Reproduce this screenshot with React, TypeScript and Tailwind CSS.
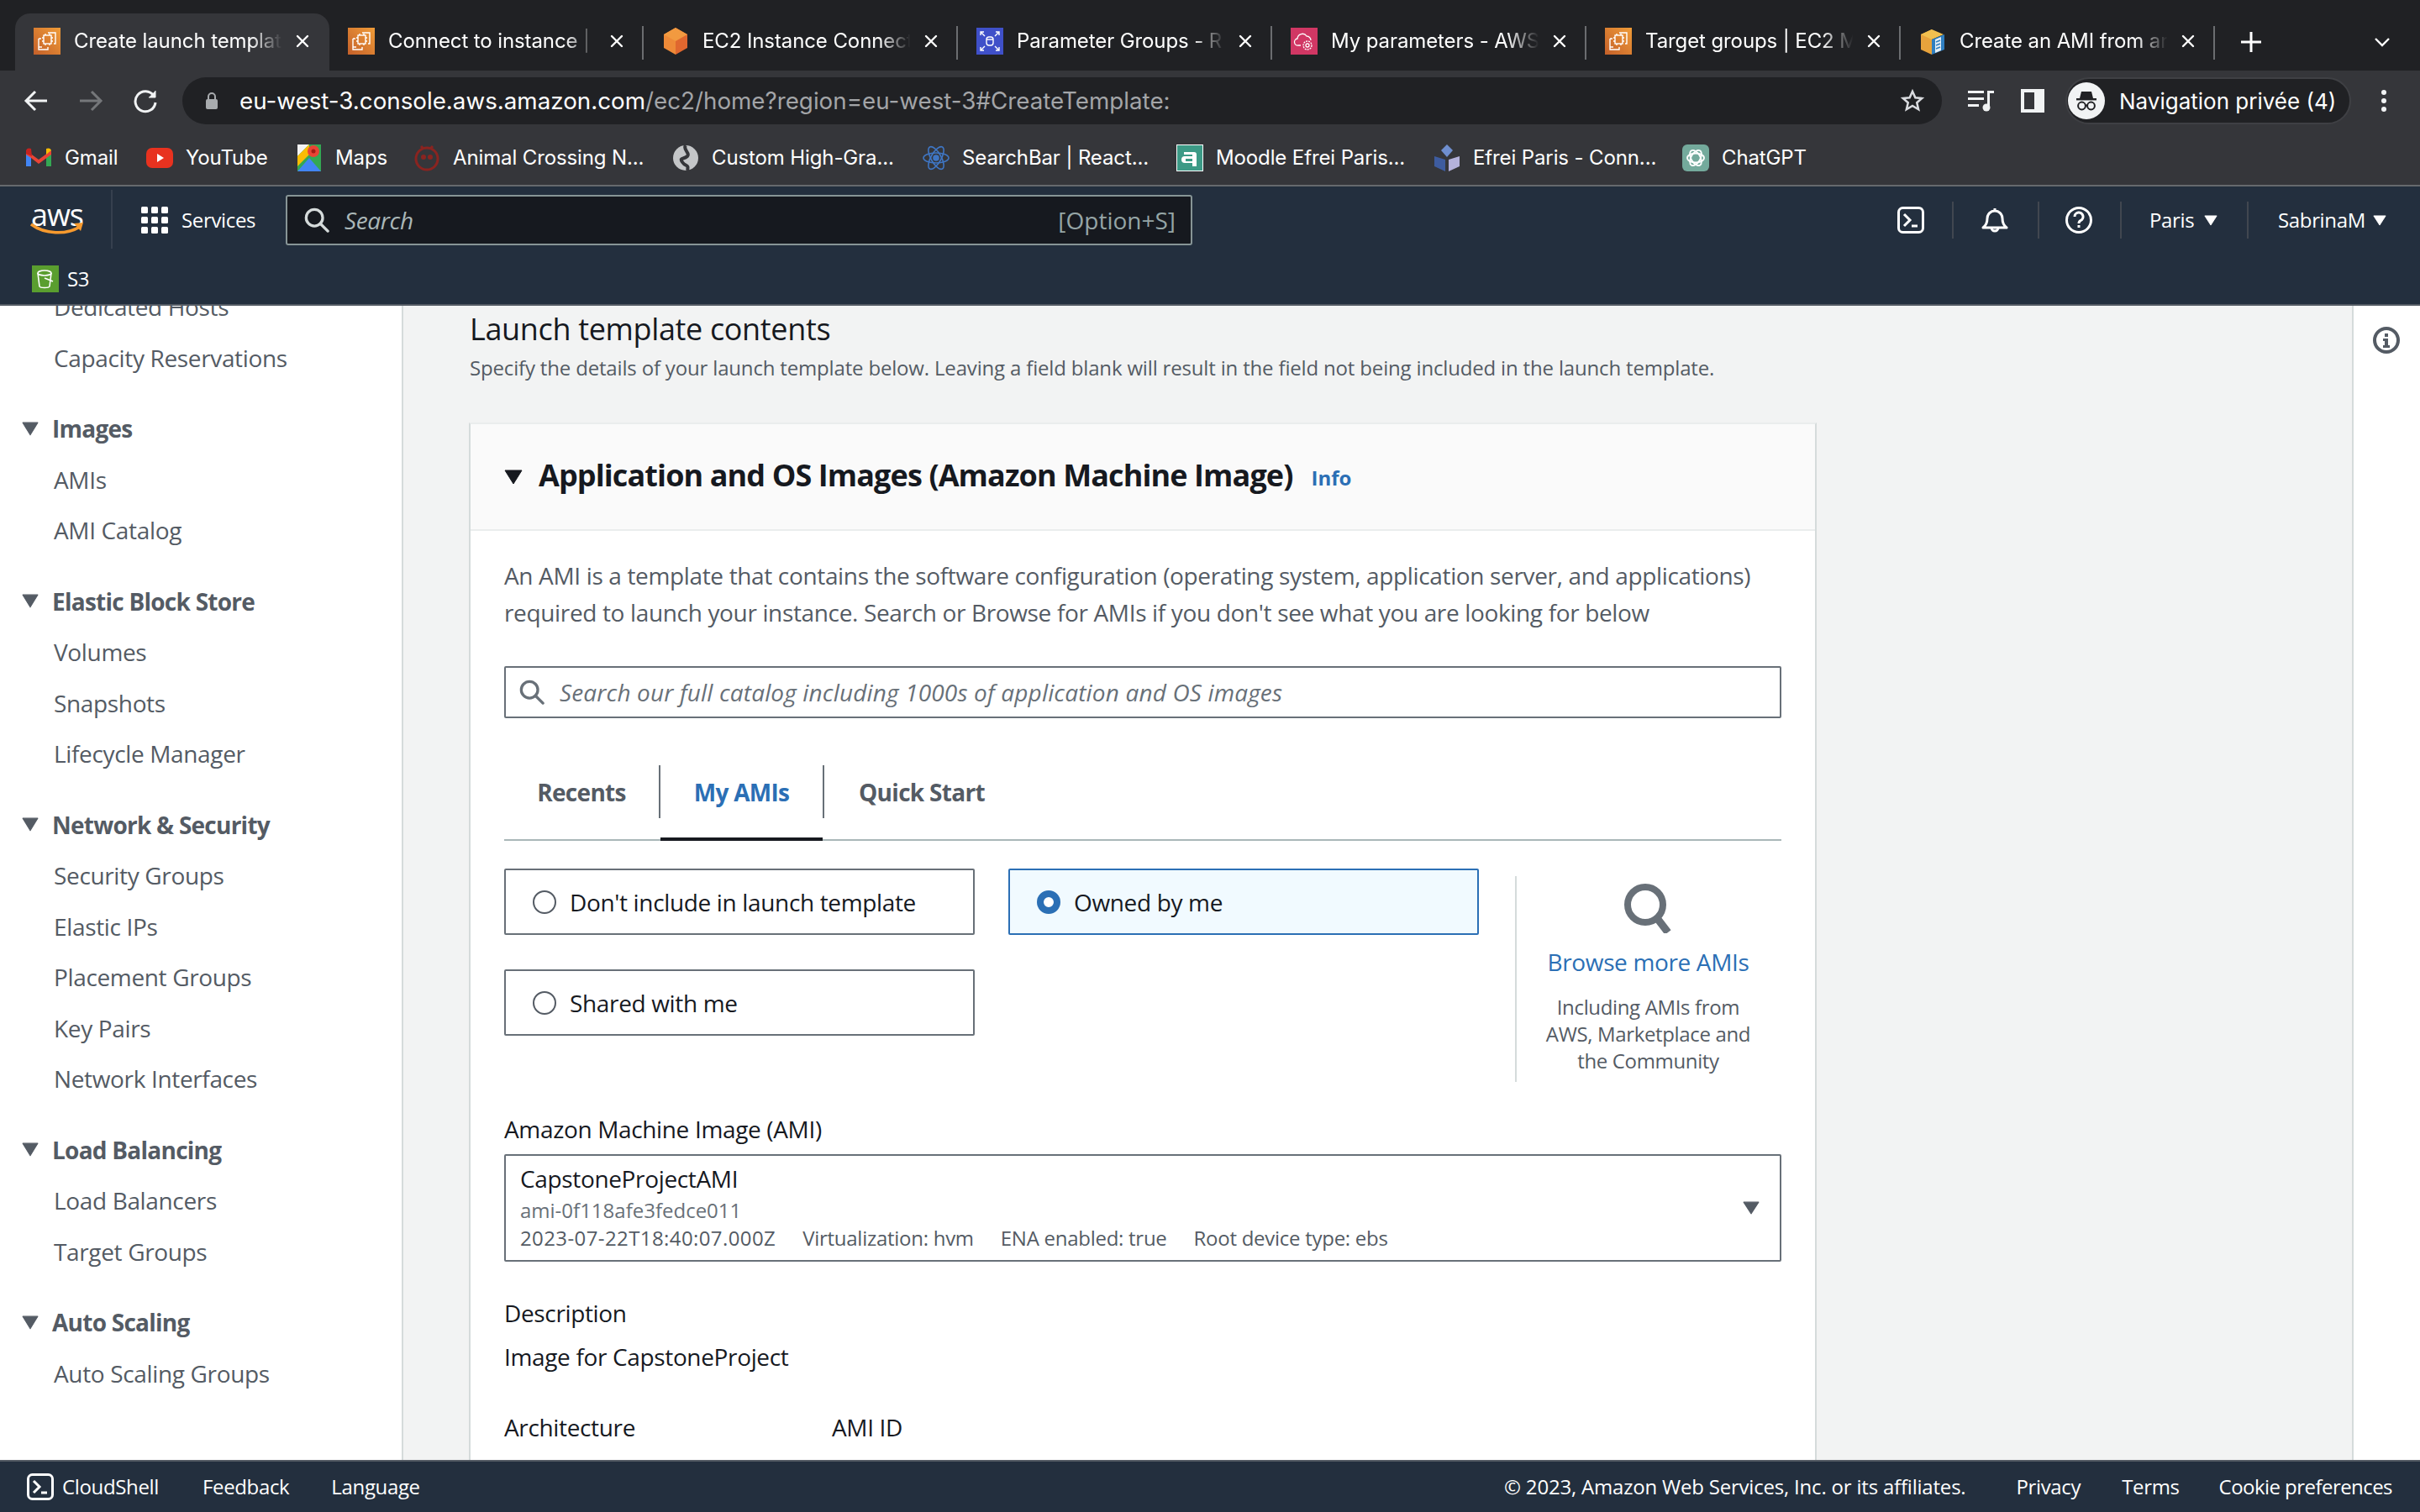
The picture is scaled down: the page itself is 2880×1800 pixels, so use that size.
import React from 'react';

const chromeFont = "font-['Inter',sans-serif] tracking-normal";
const pageFont = "font-['Open_Sans','Noto_Sans',sans-serif] tracking-[-0.35px]";

const Ec2Icon = () => (
  <svg width="32" height="32" viewBox="0 0 32 32" className="shrink-0">
    <defs>
      <linearGradient id="ec2" x1="0" y1="1" x2="1" y2="0">
        <stop offset="0" stopColor="#c4602a" />
        <stop offset="1" stopColor="#f09c38" />
      </linearGradient>
    </defs>
    <rect width="32" height="32" fill="url(#ec2)" />
    <g fill="none" stroke="#fff" strokeWidth="1.4">
      <rect x="12" y="9" width="9" height="10" />
      <path d="M14 7v2M19 7v2M14 19v2M19 19v2M10 12h2M10 16h2M21 12h2M21 16h2" />
      <path d="M17 6h9v13h-2M6 13v13h11v-3" />
      <path d="M6 13h3M6 23h4" />
    </g>
  </svg>
);

const CubeIcon = () => (
  <svg width="32" height="32" viewBox="0 0 32 32" className="shrink-0">
    <path d="M16 0L30 8v16l-14 8z" fill="#e0672f" />
    <path d="M16 0L2 8v16l14 8z" fill="#ee8a38" />
    <path d="M16 0l14 8-14 8L2 8z" fill="#f29a40" />
  </svg>
);

const ParamIcon = () => (
  <svg width="32" height="32" viewBox="0 0 32 32" className="shrink-0">
    <rect width="32" height="32" fill="#3f50c9" />
    <g fill="none" stroke="#fff" strokeWidth="1.4">
      <path d="M5 9V5h4M23 5h4v4M5 23v4h4M27 23v4h-4M6 6l4 4M26 6l-4 4M6 26l4-4M26 26l-4-4" />
      <rect x="12" y="11" width="8" height="10" rx="3" />
      <path d="M12 14h8" />
    </g>
  </svg>
);

const PinkIcon = () => (
  <svg width="32" height="32" viewBox="0 0 32 32" className="shrink-0">
    <rect width="32" height="32" fill="#d13764" />
    <g fill="none" stroke="#fff" strokeWidth="1.3">
      <path d="M12 21H9a4 4 0 0 1-1-8 6 6 0 0 1 11-3 5 5 0 0 1 5 5" />
      <circle cx="20" cy="21" r="2" />
      <circle cx="20" cy="21" r="5" strokeDasharray="2 1" />
    </g>
  </svg>
);

const BoxIcon = () => (
  <svg width="32" height="32" viewBox="0 0 32 32" className="shrink-0">
    <path d="M15 2L2 8v18l13 6z" fill="#e8a33c" />
    <path d="M15 2l14 6-14 6L2 8z" fill="#f2c04f" />
    <path d="M15 14l15-6v18l-15 6z" fill="#2f7fc1" />
    <path d="M19 14l7-3v16l-7 3z" fill="#e4eef6" />
    <path d="M20 17l5-2M20 21l5-2M20 25l5-2" stroke="#2f7fc1" strokeWidth="1.4" />
  </svg>
);

// titles are cut off by the browser in the screenshot, so only the visible part is kept
const tabs = [
  { title: 'Create launch templat', icon: <Ec2Icon />, active: true },
  { title: 'Connect to instance |', icon: <Ec2Icon /> },
  { title: 'EC2 Instance Connect', icon: <CubeIcon /> },
  { title: 'Parameter Groups - R', icon: <ParamIcon /> },
  { title: 'My parameters - AWS', icon: <PinkIcon /> },
  { title: 'Target groups | EC2 M', icon: <Ec2Icon /> },
  { title: 'Create an AMI from ar', icon: <BoxIcon /> },
];

const CloseX = () => (
  <svg width="16" height="16" viewBox="0 0 16 16" className="shrink-0" stroke="#fff" strokeWidth="2.4" strokeLinecap="round">
    <path d="M2 2l12 12M14 2L2 14" />
  </svg>
);

const TabStrip = () => (
  <div className={`h-[84px] bg-[#202124] flex items-end pl-[18px] ${chromeFont}`}>
    {tabs.map((t, i) => (
      <div
        key={i}
        className={`w-[374px] h-[68px] flex items-center pl-[22px] shrink-0 relative ${
          t.active ? 'bg-[#35363a] rounded-t-[18px]' : ''
        }`}
      >
        <div className="flex items-center h-[36px] w-full -mt-[2px]">
          {t.icon}
          <span className="ml-[16px] w-[250px] overflow-hidden whitespace-nowrap text-[24px] leading-[32px] tracking-[-0.1px] text-white [mask-image:linear-gradient(to_right,black_84%,transparent_99%)]">
            {t.title}
          </span>
          <span className="ml-[14px]">
            <CloseX />
          </span>
        </div>
        {!t.active && i !== 0 && (
          <div className="absolute right-0 top-[15px] w-[2px] h-[40px] bg-[#6b6d70]" />
        )}
      </div>
    ))}
    <div className="flex items-center h-[68px] ml-[8px] -mt-[2px]">
      <svg width="28" height="28" viewBox="0 0 28 28" stroke="#fff" strokeWidth="3" className="ml-[21px]">
        <path d="M14 2v24M2 14h24" />
      </svg>
      <svg width="20" height="12" viewBox="0 0 20 12" fill="none" stroke="#fff" strokeWidth="2.4" className="ml-[132px]">
        <path d="M2 2l8 8 8-8" />
      </svg>
    </div>
  </div>
);

const Toolbar = () => (
  <div className={`h-[72px] bg-[#35363a] flex items-center ${chromeFont}`}>
    <svg width="30" height="30" viewBox="0 0 30 30" fill="none" stroke="#f1f3f4" strokeWidth="3" className="ml-[28px]">
      <path d="M28 15H4M14 4L3 15l11 11" />
    </svg>
    <svg width="30" height="30" viewBox="0 0 30 30" fill="none" stroke="#75777a" strokeWidth="3" className="ml-[35px]">
      <path d="M2 15h24M16 4l11 11-11 11" />
    </svg>
    <svg width="30" height="30" viewBox="0 0 30 30" fill="none" stroke="#f1f3f4" strokeWidth="3" className="ml-[35px]">
      <path d="M25 9a12 12 0 1 0 2 8" />
      <path d="M27 3v8h-8" fill="#f1f3f4" strokeWidth="1" />
    </svg>
    <div className="ml-[29px] w-[2094px] h-[56px] rounded-full bg-[#202124] flex items-center pl-[28px] pr-[20px]">
      <svg width="14" height="20" viewBox="0 0 14 20" className="shrink-0">
        <rect y="8" width="14" height="12" rx="2" fill="#a8abae" />
        <path d="M3 9V5a4 4 0 0 1 8 0v4" fill="none" stroke="#a8abae" strokeWidth="2" />
      </svg>
      <span className="ml-[26px] text-[27.75px] leading-[34px] whitespace-nowrap">
        <span className="text-white">eu-west-3.console.aws.amazon.com</span>
        <span className="text-[#a3a5a8]">/ec2/home?region=eu-west-3#CreateTemplate:</span>
      </span>
      <svg width="30" height="30" viewBox="0 0 24 24" fill="none" stroke="#dadce0" strokeWidth="2" className="ml-auto">
        <path d="M12 3l2.7 6 6.3.6-4.8 4.2 1.5 6.4L12 16.8 6.3 20.2l1.5-6.4L3 9.6 9.3 9z" />
      </svg>
    </div>
    <svg width="32" height="28" viewBox="0 0 32 28" className="ml-[31px]" fill="#f1f3f4">
      <rect x="0" y="2" width="19" height="3" />
      <rect x="0" y="10" width="19" height="3" />
      <rect x="0" y="18" width="13" height="3" />
      <rect x="23" y="2" width="3" height="20" />
      <rect x="23" y="2" width="8" height="3" />
      <circle cx="22" cy="22" r="4.5" />
    </svg>
    <svg width="28" height="28" viewBox="0 0 28 28" className="ml-[31px]">
      <rect width="28" height="28" fill="#f1f3f4" />
      <rect x="4" y="4" width="12" height="20" fill="#35363a" />
    </svg>
    <div className="ml-[25px] w-[340px] h-[56px] rounded-full bg-[#202124] border-2 border-[#3f4044] flex items-center pl-[1px] shrink-0">
      <div className="w-[44px] h-[44px] rounded-full bg-[#f1f3f4] flex items-center justify-center shrink-0">
        <svg width="32" height="32" viewBox="0 0 32 32" fill="#202124">
          <path d="M10 5h12l2 8H8z" />
          <rect x="4" y="13" width="24" height="2.4" />
          <circle cx="10.5" cy="22" r="4.4" fill="none" stroke="#202124" strokeWidth="2" />
          <circle cx="21.5" cy="22" r="4.4" fill="none" stroke="#202124" strokeWidth="2" />
          <path d="M14.5 21.5h3" stroke="#202124" strokeWidth="2" />
        </svg>
      </div>
      <span className="ml-[17px] text-[26px] text-white whitespace-nowrap">Navigation privée (4)</span>
    </div>
    <svg width="6" height="26" viewBox="0 0 6 26" fill="#f1f3f4" className="ml-[36px]">
      <circle cx="3" cy="3" r="3" />
      <circle cx="3" cy="13" r="3" />
      <circle cx="3" cy="23" r="3" />
    </svg>
  </div>
);

const GmailIcon = () => (
  <svg width="30" height="24" viewBox="0 0 30 24">
    <path d="M0 3v19h6V8z" fill="#4285f4" />
    <path d="M30 3v19h-6V8z" fill="#34a853" />
    <path d="M0 3l15 11L30 3v5L15 19 6 12 0 8z" fill="#ea4335" />
    <path d="M24 8l6-5c-1-3-4-3-6-2z" fill="#fbbc04" />
    <path d="M0 3c1-3 4-3 6-2l1 9-7-3z" fill="#c5221f" />
  </svg>
);

const bookmarks = [
  { label: 'Gmail', w: 144, icon: <GmailIcon /> },
  {
    label: 'YouTube',
    w: 178,
    icon: (
      <svg width="32" height="32" viewBox="0 0 32 32">
        <rect y="4" width="32" height="24" rx="7" fill="#e8321f" />
        <path d="M13 11l8 5-8 5z" fill="#fff" />
      </svg>
    ),
  },
  {
    label: 'Maps',
    w: 140,
    icon: (
      <svg width="28" height="32" viewBox="0 0 28 32">
        <rect width="28" height="32" fill="#34a853" />
        <path d="M0 32L14 16l14 16z" fill="#4285f4" />
        <path d="M0 0h14L0 14z" fill="#f4f4f4" />
        <path d="M0 14L14 0v12L0 26z" fill="#fbbc04" />
        <circle cx="19" cy="8" r="7" fill="#ea4335" />
        <circle cx="19" cy="8" r="2.5" fill="#a51c14" />
      </svg>
    ),
  },
  {
    label: 'Animal Crossing N...',
    w: 308,
    icon: (
      <svg width="34" height="32" viewBox="0 0 34 32" fill="none" stroke="#8a2420" strokeWidth="3">
        <circle cx="17" cy="17" r="13" />
        <path d="M10 2l3 3M24 2l-3 3" />
        <circle cx="13" cy="15" r="1.5" fill="#8a2420" />
        <circle cx="21" cy="15" r="1.5" fill="#8a2420" />
      </svg>
    ),
  },
  {
    label: 'Custom High-Gra...',
    w: 298,
    icon: (
      <svg width="32" height="32" viewBox="0 0 32 32">
        <circle cx="16" cy="16" r="15" fill="#c4c6c8" />
        <path d="M16 1c-4 5 6 9 2 13S8 15 12 21s8 2 6 10" stroke="#35363a" strokeWidth="4" fill="none" />
      </svg>
    ),
  },
  {
    label: 'SearchBar | React...',
    w: 302,
    icon: (
      <svg width="32" height="32" viewBox="0 0 32 32" fill="none" stroke="#3f76c4" strokeWidth="1.6">
        <ellipse cx="16" cy="16" rx="15" ry="6" />
        <ellipse cx="16" cy="16" rx="15" ry="6" transform="rotate(60 16 16)" />
        <ellipse cx="16" cy="16" rx="15" ry="6" transform="rotate(120 16 16)" />
        <circle cx="16" cy="16" r="3" fill="#3f76c4" />
      </svg>
    ),
  },
  {
    label: 'Moodle Efrei Paris...',
    w: 306,
    icon: (
      <svg width="32" height="32" viewBox="0 0 32 32">
        <rect width="32" height="32" fill="#fff" />
        <rect x="1" y="1" width="30" height="30" fill="#3c9a86" />
        <path d="M9 9h12a3 3 0 0 1 3 3v14h-5v-4H10a4 4 0 0 1 0-8h9v-2H9z" fill="#fff" />
        <rect x="11" y="17" width="8" height="3" fill="#3c9a86" />
      </svg>
    ),
  },
  {
    label: 'Efrei Paris - Conn...',
    w: 296,
    icon: (
      <svg width="30" height="32" viewBox="0 0 30 32">
        <path d="M15 0l7 7-7 8-7-8z" fill="#6f8fd0" />
        <path d="M0 14l13 4v14L0 26z" fill="#3e5c9f" />
        <path d="M30 14l-13 4v14l13-6z" fill="#b4b2dc" />
      </svg>
    ),
  },
  {
    label: 'ChatGPT',
    w: 200,
    icon: (
      <svg width="32" height="32" viewBox="0 0 32 32">
        <rect width="32" height="32" rx="6" fill="#74aa9c" />
        <g fill="none" stroke="#fff" strokeWidth="1.8">
          <ellipse cx="16" cy="16" rx="10" ry="5.5" />
          <ellipse cx="16" cy="16" rx="10" ry="5.5" transform="rotate(60 16 16)" />
          <ellipse cx="16" cy="16" rx="10" ry="5.5" transform="rotate(120 16 16)" />
        </g>
      </svg>
    ),
  },
];

const BookmarksBar = () => (
  <div className={`h-[64px] bg-[#35363a] flex items-center pl-[29px] ${chromeFont}`}>
    {bookmarks.map((b) => (
      <div key={b.label} className="flex items-center shrink-0" style={{ width: b.w }}>
        <span className="w-[34px] flex justify-center shrink-0">{b.icon}</span>
        <span className="ml-[14px] text-[24px] tracking-[-0.12px] text-white whitespace-nowrap">{b.label}</span>
      </div>
    ))}
  </div>
);

const Divider = () => <div className="w-[2px] h-[44px] bg-[#414750] shrink-0" />;

const Caret = ({ w = 16, h = 13, color = '#fff' }: { w?: number; h?: number; color?: string }) => (
  <svg width={w} height={h} viewBox="0 0 18 14" preserveAspectRatio="none" className="shrink-0">
    <path d="M1 1h16L9 13z" fill={color} stroke={color} strokeLinejoin="round" />
  </svg>
);

const SearchGlyph = ({ size, color, width = 3.5 }: { size: number; color: string; width?: number }) => (
  <svg width={size} height={size} viewBox="0 0 32 32" fill="none" stroke={color} strokeWidth={width} className="shrink-0">
    <circle cx="13" cy="13" r="10.5" />
    <path d="M20.5 20.5L30 30" strokeLinecap="round" />
  </svg>
);

const AwsHeader = () => (
  <div className={`h-[142px] bg-[#232f3e] border-b-2 border-[#545b64] shrink-0 text-white ${pageFont}`}>
    <div className="h-[80px] flex items-center">
      <div className="ml-[36px] w-[64px] h-[40px] relative shrink-0 -mt-[2px]">
        <span className="block text-[36px] leading-[30px] text-center tracking-[-1px]">aws</span>
        <svg width="64" height="16" viewBox="0 0 64 16" className="absolute left-0 bottom-0">
          <path d="M1 2c16 12 42 13 58 3" fill="none" stroke="#f79a2e" strokeWidth="3.5" />
          <path d="M52 1l11-1-3 10z" fill="#f79a2e" />
        </svg>
      </div>
      <div className="ml-[32px] w-[2px] h-[70px] bg-[#36404e] shrink-0 -mt-[2px]" />
      <svg width="32" height="32" viewBox="0 0 32 32" fill="#fff" className="ml-[34px] shrink-0">
        {[0, 12, 24].flatMap((y) =>
          [0, 12, 24].map((x) => <rect key={`${x}-${y}`} x={x} y={y} width="8" height="8" rx="1.5" />)
        )}
      </svg>
      <span className="ml-[16px] text-[24px] w-[90px] whitespace-nowrap">Services</span>
      <div className="ml-[34px] w-[1079px] h-[60px] bg-[#16191f] border-2 border-[#879596] rounded-[3px] flex items-center pl-[20px] pr-[18px] shrink-0">
        <SearchGlyph size={30} color="#d5dbdb" />
        <span className="ml-[18px] text-[28px] italic text-[#aab7b8]">Search</span>
        <span className="ml-auto text-[28px] tracking-normal text-[#95a5a6]">[Option+S]</span>
      </div>
      <svg width="32" height="32" viewBox="0 0 32 32" fill="none" stroke="#fff" strokeWidth="3" className="ml-[839px] shrink-0">
        <rect x="1.5" y="1.5" width="29" height="29" rx="5" />
        <path d="M8 9l7 7-7 7M17 23h7" />
      </svg>
      <div className="ml-[33px]"><Divider /></div>
      <svg width="32" height="32" viewBox="0 0 32 32" fill="none" stroke="#fff" strokeWidth="3" className="ml-[33px] shrink-0">
        <path d="M2 25c4-3 5-6 5-11a9 9 0 0 1 18 0c0 5 1 8 5 11z" strokeLinejoin="round" />
        <path d="M12 25a4 4 0 0 0 8 0M16 2v3" />
      </svg>
      <div className="ml-[35px]"><Divider /></div>
      <svg width="32" height="32" viewBox="0 0 32 32" fill="none" stroke="#fff" strokeWidth="3" className="ml-[31px] shrink-0">
        <circle cx="16" cy="16" r="14.5" />
        <path d="M11 12a5 5 0 1 1 7 4.6c-1.6.8-2 1.6-2 3.4" />
        <path d="M16 22v3" />
      </svg>
      <div className="ml-[33px]"><Divider /></div>
      <span className="ml-[33px] text-[24px] w-[65px]">Paris</span>
      <Caret />
      <div className="ml-[35px]"><Divider /></div>
      <span className="ml-[35px] text-[24px] w-[113px] whitespace-nowrap">SabrinaM</span>
      <Caret />
    </div>
    <div className="h-[60px] flex items-center pl-[38px]">
      <svg width="32" height="32" viewBox="0 0 32 32" className="shrink-0">
        <rect width="32" height="32" fill="#5a9e2f" />
        <g fill="none" stroke="#fff" strokeWidth="1.6">
          <ellipse cx="15" cy="9" rx="8" ry="3" />
          <path d="M7 9l2 16c1 2 11 2 12 0l2-16" />
          <path d="M15 15l10 4" />
        </g>
      </svg>
      <span className="ml-[10px] text-[24px]">S3</span>
    </div>
  </div>
);

type NavGroup = { title?: string; items: string[] };

const navGroups: NavGroup[] = [
  { items: ['Dedicated Hosts', 'Capacity Reservations'] },
  { title: 'Images', items: ['AMIs', 'AMI Catalog'] },
  { title: 'Elastic Block Store', items: ['Volumes', 'Snapshots', 'Lifecycle Manager'] },
  {
    title: 'Network & Security',
    items: ['Security Groups', 'Elastic IPs', 'Placement Groups', 'Key Pairs', 'Network Interfaces'],
  },
  { title: 'Load Balancing', items: ['Load Balancers', 'Target Groups'] },
  { title: 'Auto Scaling', items: ['Auto Scaling Groups'] },
];

const Sidebar = () => (
  <div className="w-[480px] shrink-0 bg-white border-r-2 border-[#d5dbdb] overflow-hidden">
    <div className="-mt-[29px]">
      {navGroups.map((g, i) => (
        <div key={i} className="mb-[24px]">
          {g.title && (
            <div className="h-[60.5px] flex items-center pl-[26px]">
              <Caret w={20} h={17} color="#545b64" />
              <span className="ml-[16px] text-[28px] font-bold tracking-[-0.75px] text-[#545b64] whitespace-nowrap">{g.title}</span>
            </div>
          )}
          {g.items.map((it) => (
            <div key={it} className="h-[60.5px] flex items-center pl-[64px] text-[28px] text-[#545b64] whitespace-nowrap">
              {it}
            </div>
          ))}
        </div>
      ))}
    </div>
  </div>
);

const RadioCard = ({ label, selected }: { label: string; selected?: boolean }) => (
  <div
    className={`w-[560px] h-[79px] rounded-[2px] border-2 flex items-center pl-[32px] ${
      selected ? 'bg-[#f1faff] border-[#2b6fb5]' : 'bg-white border-[#687078]'
    }`}
  >
    {selected ? (
      <span className="w-[28px] h-[28px] rounded-full border-[8px] border-[#2b6fb5] bg-white shrink-0" />
    ) : (
      <span className="w-[28px] h-[28px] rounded-full border-2 border-[#545b64] bg-white shrink-0" />
    )}
    <span className="ml-[16px] text-[28px] text-[#16191f]">{label}</span>
  </div>
);

const Tab = ({ label, active, width }: { label: string; active?: boolean; width: string }) => (
  <div
    className={`${width} h-full relative flex items-center justify-center pt-[7px] text-[28px] font-bold tracking-[-0.7px] ${
      active ? 'text-[#2b6fb5]' : 'text-[#545b64]'
    }`}
  >
    {label}
    {active && <div className="absolute left-0 right-0 -bottom-[2px] h-[4px] bg-[#16191f]" />}
  </div>
);

const TabSep = () => <div className="w-[2px] h-[63px] bg-[#687078] self-center mt-[6px] shrink-0" />;

const Panel = () => (
  <div className="-ml-[1px] mt-[49px] w-[1604px] flex-1 shrink-0 bg-white border-x-2 border-t-2 border-x-[#d5dbdb] border-t-[#eaeded]">
    <div className="h-[127px] bg-[#fafafa] border-b-2 border-[#eaeded] flex items-center pl-[40px]">
      <svg width="22" height="18" viewBox="0 0 22 18" className="shrink-0">
        <path d="M1 1h20L11 17z" fill="#16191f" stroke="#16191f" strokeLinejoin="round" />
      </svg>
      <h2 className="ml-[19px] -mt-[4px] text-[36px] font-bold tracking-[-0.9px] text-[#16191f] whitespace-nowrap">
        Application and OS Images (Amazon Machine Image)
      </h2>
      <span className="ml-[22px] mt-[2px] text-[24px] font-bold tracking-normal text-[#2b6fb5]">Info</span>
    </div>
    <div className="px-[40px] pt-[31px]">
      <p className="text-[28px] leading-[44px] text-[#545b64] w-[1520px]">
        An AMI is a template that contains the software configuration (operating system, application server, and
        applications) required to launch your instance. Search or Browse for AMIs if you don't see what you are looking
        for below
      </p>
      <div className="mt-[42px] h-[62px] rounded-[2px] border-2 border-[#687078] flex items-center pl-[16px]">
        <SearchGlyph size={30} color="#687078" />
        <span className="ml-[18px] text-[28px] italic tracking-[0.15px] text-[#687078]">
          Search our full catalog including 1000s of application and OS images
        </span>
      </div>
      <div className="mt-[25px] h-[121px] flex border-b-2 border-[#aab7b8]">
        <Tab label="Recents" width="w-[184px]" />
        <TabSep />
        <Tab label="My AMIs" active width="w-[193px]" />
        <TabSep />
        <Tab label="Quick Start" width="w-[232px]" />
      </div>
      <div className="mt-[33px] flex">
        <div className="w-[1160px] shrink-0 flex flex-wrap gap-x-[40px] gap-y-[41px] content-start">
          <RadioCard label="Don't include in launch template" />
          <RadioCard label="Owned by me" selected />
          <RadioCard label="Shared with me" />
        </div>
        <div className="ml-[43px] mt-[9px] w-[317px] h-[245px] border-l-2 border-[#d5dbdb] pr-[2px] flex flex-col items-center">
          <svg width="60" height="60" viewBox="0 0 60 60" fill="none" stroke="#687078" strokeWidth="8" className="mt-[8px] shrink-0">
            <circle cx="26" cy="26" r="21" />
            <path d="M40 42l13 17" strokeWidth="9" />
          </svg>
          <a className="mt-[16px] text-[28px] leading-[36px] text-[#2b6fb5]">Browse more AMIs</a>
          <p className="mt-[20px] w-[255px] text-center text-[24px] leading-[32px] text-[#545b64]">
            Including AMIs from AWS, Marketplace and the Community
          </p>
        </div>
      </div>
      <label className="block mt-[40px] text-[28px] leading-[32px] text-[#16191f]">Amazon Machine Image (AMI)</label>
      <div className="mt-[14px] h-[128px] rounded-[2px] border-2 border-[#687078] flex items-center pl-[17px] pr-[24px]">
        <div className="flex-1 -mt-[2px]">
          <div className="text-[28px] leading-[34px] text-[#16191f]">CapstoneProjectAMI</div>
          <div className="mt-[4px] text-[24px] leading-[34px] tracking-normal text-[#687078]">ami-0f118afe3fedce011</div>
          <div className="mt-[1px] text-[24px] leading-[30px] tracking-[-0.27px] text-[#545b64] flex gap-[32px] whitespace-nowrap">
            <span className="tracking-[0.4px]">2023-07-22T18:40:07.000Z</span>
            <span>Virtualization: hvm</span>
            <span>ENA enabled: true</span>
            <span>Root device type: ebs</span>
          </div>
        </div>
        <Caret w={20} h={16} color="#545b64" />
      </div>
      <div className="mt-[45px] text-[28px] leading-[32px] text-[#16191f]">Description</div>
      <div className="mt-[20px] text-[28px] leading-[32px] text-[#16191f]">Image for CapstoneProject</div>
      <div className="mt-[52px] flex text-[28px] leading-[32px] text-[#16191f]">
        <span className="w-[390px]">Architecture</span>
        <span>AMI ID</span>
      </div>
    </div>
  </div>
);

const MainArea = () => (
  <div className="flex-1 min-w-0 bg-[#f2f3f3] overflow-hidden pl-[79px] flex flex-col">
    <h1 className="mt-[8px] text-[36px] leading-[40px] text-[#16191f]">Launch template contents</h1>
    <p className="mt-[10px] text-[24px] leading-[32px] tracking-[-0.17px] text-[#545b64] whitespace-nowrap">
      Specify the details of your launch template below. Leaving a field blank will result in the field not being
      included in the launch template.
    </p>
    <Panel />
  </div>
);

const InfoRail = () => (
  <div className="w-[81px] shrink-0 bg-white border-l-2 border-[#d5dbdb] flex justify-center pt-[25px]">
    <svg width="32" height="32" viewBox="0 0 32 32" fill="none" className="shrink-0 -ml-[2px]">
      <circle cx="16" cy="16" r="14" stroke="#545b64" strokeWidth="4" />
      <rect x="14" y="8" width="4" height="4" fill="#545b64" />
      <path d="M12 14h6v8h2v3h-8v-3h2v-5h-2z" fill="#545b64" />
    </svg>
  </div>
);

const Footer = () => (
  <div className={`h-[62px] shrink-0 bg-[#232f3e] border-t-2 border-[#545b64] flex items-center text-[24px] text-white ${pageFont}`}>
    <svg width="32" height="32" viewBox="0 0 32 32" fill="none" stroke="#fff" strokeWidth="3" className="ml-[32px] shrink-0">
      <rect x="1.5" y="1.5" width="29" height="29" rx="5" />
      <path d="M8 9l7 7-7 7M17 23h7" />
    </svg>
    <span className="ml-[10px]">CloudShell</span>
    <span className="ml-[52px]">Feedback</span>
    <span className="ml-[50px]">Language</span>
    <span className="ml-auto tracking-[-0.2px]">© 2023, Amazon Web Services, Inc. or its affiliates.</span>
    <span className="ml-[60px]">Privacy</span>
    <span className="ml-[49px]">Terms</span>
    <span className="ml-[47px] mr-[33px] tracking-[-0.55px]">Cookie preferences</span>
  </div>
);

export default function App() {
  return (
    <div className={`w-[2880px] h-[1800px] flex flex-col overflow-hidden bg-white ${pageFont}`}>
      <TabStrip />
      <Toolbar />
      <BookmarksBar />
      <div className="h-[2px] bg-[#66696d] shrink-0" />
      <AwsHeader />
      <div className="flex-1 min-h-0 flex">
        <Sidebar />
        <MainArea />
        <InfoRail />
      </div>
      <Footer />
    </div>
  );
}
